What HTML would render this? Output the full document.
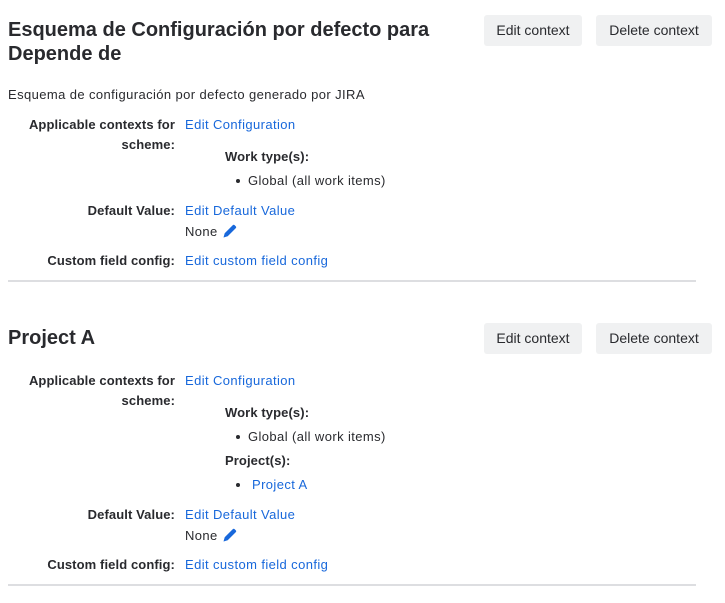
<!DOCTYPE html>
<html><head><meta charset="utf-8"><style>
body{margin:0;width:725px;height:603px;background:#fff;font-family:"Liberation Sans",sans-serif;color:#292a2e;position:relative;overflow:hidden}
.a{position:absolute;white-space:nowrap;font-size:13px;line-height:16px;letter-spacing:0.4px}
.t{position:absolute;font-size:20px;font-weight:bold;line-height:24px;color:#292a2e}
.b{position:absolute;background:#f0f1f2;border-radius:3px;font-size:14px;height:31px;line-height:31px;text-align:center;color:#292a2e}
.l{font-weight:bold;text-align:right;right:550px;letter-spacing:0.1px}
.k{color:#1868db}
.bo{font-weight:bold;letter-spacing:0.1px}
.hr{position:absolute;left:8px;width:688px;height:2px;background:#dddee1}
.dot{position:absolute;width:4px;height:4px;border-radius:2px;background:#292a2e}
</style></head><body>
<div class="t" style="left:8px;top:18px">Esquema de Configuración por defecto para</div>
<div class="t" style="left:8px;top:42px">Depende de</div>
<div class="b" style="left:484px;top:15px;width:98px">Edit context</div>
<div class="b" style="left:596px;top:15px;width:116px">Delete context</div>
<div class="a" style="left:8px;top:87px">Esquema de configuración por defecto generado por JIRA</div>
<div class="a l" style="top:117px">Applicable contexts for</div>
<div class="a l" style="top:137px">scheme:</div>
<div class="a k" style="left:185px;top:117px">Edit Configuration</div>
<div class="a bo" style="left:225px;top:149px">Work type(s):</div>
<div class="dot" style="left:236px;top:179px"></div>
<div class="a" style="left:248px;top:173px">Global (all work items)</div>
<div class="a l" style="top:203px">Default Value:</div>
<div class="a k" style="left:185px;top:203px">Edit Default Value</div>
<div class="a" style="left:185px;top:223px">None <svg width="16" height="16" viewBox="0 0 16 16" style="vertical-align:-3px"><path d="M1.5 14.5l1.2-4.2 8-8a1.4 1.4 0 0 1 2 0l1 1a1.4 1.4 0 0 1 0 2l-8 8z" fill="#1868db"/></svg></div>
<div class="a l" style="top:253px">Custom field config:</div>
<div class="a k" style="left:185px;top:253px">Edit custom field config</div>
<div class="hr" style="top:280px"></div>

<div class="t" style="left:8px;top:326px">Project A</div>
<div class="b" style="left:484px;top:323px;width:98px">Edit context</div>
<div class="b" style="left:596px;top:323px;width:116px">Delete context</div>
<div class="a l" style="top:373px">Applicable contexts for</div>
<div class="a l" style="top:393px">scheme:</div>
<div class="a k" style="left:185px;top:373px">Edit Configuration</div>
<div class="a bo" style="left:225px;top:405px">Work type(s):</div>
<div class="dot" style="left:236px;top:435px"></div>
<div class="a" style="left:248px;top:429px">Global (all work items)</div>
<div class="a bo" style="left:225px;top:453px">Project(s):</div>
<div class="dot" style="left:236px;top:483px"></div>
<div class="a k" style="left:252px;top:477px">Project A</div>
<div class="a l" style="top:507px">Default Value:</div>
<div class="a k" style="left:185px;top:507px">Edit Default Value</div>
<div class="a" style="left:185px;top:527px">None <svg width="16" height="16" viewBox="0 0 16 16" style="vertical-align:-3px"><path d="M1.5 14.5l1.2-4.2 8-8a1.4 1.4 0 0 1 2 0l1 1a1.4 1.4 0 0 1 0 2l-8 8z" fill="#1868db"/></svg></div>
<div class="a l" style="top:557px">Custom field config:</div>
<div class="a k" style="left:185px;top:557px">Edit custom field config</div>
<div class="hr" style="top:584px"></div>
</body></html>
